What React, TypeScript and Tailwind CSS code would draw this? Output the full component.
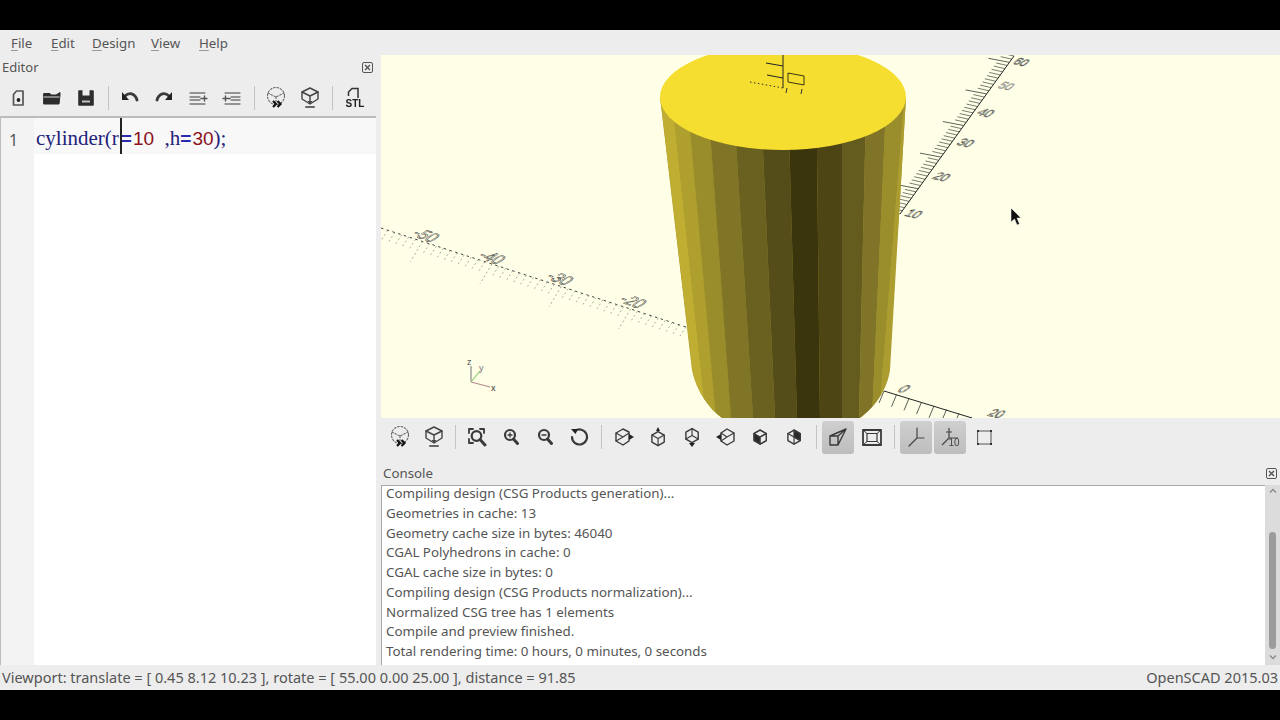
import React from "react";

const B: [number, number][] = [[677,698],[687,706],[700,716],[718,731],[742,753],[767,775],[792,797],[818,820],[842,842],[863,859],[880,872],[893,879],[897,880]];
const C = ["#bfae31","#ae9f2e","#998c2a","#807527","#6a6121","#554d19","#3b350d","#4d4614","#645b1f","#7f7428","#9a8d2c","#ac9d30"];
const xAt = (b: [number, number], y: number) => b[0] + ((b[1] - b[0]) * (y - 240)) / 178;

function Viewport() {
  const yTicks: React.ReactNode[] = [];
  for (let i = 0; i <= 50; i++) {
    const t = i / 50;
    const x = 1014 - 114 * t;
    const y = 56 + 158 * t;
    const long = i % 10 === 2;
    yTicks.push(<line key={i} x1={x} y1={y} x2={x - (long ? 21 : 11)} y2={y - (long ? 4 : 2.5)} stroke="#222" strokeWidth="0.8" opacity={long ? 0.9 : 0.75} />);
  }
  const xTicks: React.ReactNode[] = [];
  for (let i = 0; i <= 44; i++) {
    const t = i / 44;
    const x = 381 + 305 * t;
    const y = 228 + 99 * t;
    const long = i % 10 === 6;
    xTicks.push(<line key={i} x1={x} y1={y} x2={x - (long ? 12 : 6)} y2={y + (long ? 20 : 9)} stroke="#888" strokeWidth="1" strokeDasharray="2 2.5" opacity="0.7" />);
  }
  const zTicks: React.ReactNode[] = [];
  for (let i = 0; i <= 7; i++) {
    const x = 884 + 12.5 * i;
    const y = 391 + 3.7 * i;
    zTicks.push(<line key={i} x1={x} y1={y} x2={x - 5} y2={y + 12} stroke="#333" strokeWidth="0.8" />);
  }
  const lbl = (s: string, x: number, y: number, rot: number, size = 12, c = "#333") => (
    <text x={0} y={0} transform={`translate(${x} ${y}) rotate(${rot}) skewX(-35)`} fontFamily="Liberation Sans, sans-serif" fontSize={size} fill="none" stroke={c} strokeWidth="0.5" textAnchor="middle">{s}</text>
  );
  return (
    <svg viewBox="381 55 899 363" width="899" height="363" className="block">
      <rect x="381" y="55" width="899" height="363" fill="#ffffe8" />
      <line x1="381" y1="228" x2="686" y2="327" stroke="#444" strokeWidth="1" strokeDasharray="2.5 3.5" />
      {xTicks}
      {lbl("-50", 421, 239, 20, 15)}
      {lbl("-40", 487, 261, 20, 15)}
      {lbl("-30", 555, 282, 20, 15)}
      {lbl("-20", 628, 305, 20, 15)}
      <line x1="1014" y1="56" x2="900" y2="214" stroke="#222" strokeWidth="1" />
      {yTicks}
      {lbl("60", 1018, 65, 14, 11)}
      {lbl("50", 1003, 89, 14, 11, "#777")}
      {lbl("40", 982, 116, 14, 12)}
      {lbl("30", 962, 146, 14, 12)}
      {lbl("20", 938, 180, 14, 12)}
      {lbl("10", 910, 217, 14, 12)}
      <line x1="884" y1="391" x2="972" y2="418" stroke="#222" strokeWidth="1" />
      {zTicks}
      {lbl("0", 900, 392, 18, 13)}
      {lbl("20", 993, 417, 12, 12)}
      <clipPath id="cyl"><path d="M660 97 L692 370 C697 394 712 412 725 420 L857 420 C872 410 887 392 890 370 L906 97 Z" /></clipPath>
      <g clipPath="url(#cyl)">
        <rect x="650" y="90" width="270" height="335" fill="#ac9d30" />
        {C.map((c, i) => (
          <polygon key={i} fill={c} points={`${xAt(B[i], 97)},97 ${xAt(B[i + 1], 97)},97 ${xAt(B[i + 1], 420)},420 ${xAt(B[i], 420)},420`} />
        ))}
      </g>
      <ellipse cx="783" cy="97" rx="123" ry="53" fill="#f5de2f" />
      <line x1="783" y1="55" x2="783" y2="88" stroke="#222" strokeWidth="1" />
      <line x1="766" y1="63" x2="783" y2="66" stroke="#222" strokeWidth="1" />
      <line x1="767" y1="75" x2="783" y2="78" stroke="#222" strokeWidth="1" />
      <line x1="750" y1="82" x2="783" y2="88" stroke="#333" strokeWidth="1" strokeDasharray="1.5 2.5" />
      <polygon points="788,73 804,76 804,85 788,82" fill="none" stroke="#3a3510" strokeWidth="1" />
      <line x1="787" y1="88" x2="786" y2="93" stroke="#333" strokeWidth="1" />
      <line x1="802" y1="89" x2="801" y2="94" stroke="#333" strokeWidth="1" />
      <line x1="471" y1="382" x2="471" y2="366" stroke="#888" strokeWidth="1.2" />
      <line x1="471" y1="382" x2="480" y2="371" stroke="#a5d58c" strokeWidth="1.2" />
      <line x1="471" y1="382" x2="490" y2="387" stroke="#b58c8c" strokeWidth="1.2" />
      <text x="467" y="365" fontFamily="Liberation Sans, sans-serif" fontSize="9" fill="#555">z</text>
      <text x="479" y="371" fontFamily="Liberation Sans, sans-serif" fontSize="9" fill="#777">y</text>
      <text x="491" y="391" fontFamily="Liberation Sans, sans-serif" fontSize="9" fill="#333">x</text>
      <path d="M1011 208 L1011 222 L1014.5 219 L1017 225 L1019.5 224 L1017 218 L1021 218 Z" fill="#111" stroke="#fff" strokeWidth="0.5" />
    </svg>
  );
}

const S = ({ children }: { children: React.ReactNode }) => (
  <svg viewBox="0 0 24 24" width="24" height="24" fill="none" stroke="#3a3a3a" strokeWidth="1.6" strokeLinejoin="round" strokeLinecap="round" className="blur-[0.4px]">{children}</svg>
);

const hex = "M12 4 L19 8 L19 16 L12 20 L5 16 L5 8 Z";
const cubeUp = <><path d={hex} /><path d="M5 8 L12 12 L19 8 M12 12 L12 20" strokeWidth="1.3" /></>;
const cubeDown = <><path d={hex} /><path d="M5 16 L12 12 L19 16 M12 12 L12 4" strokeWidth="1.3" /></>;

const I: Record<string, React.ReactNode> = {
  new: <S><path d="M10.5 5 H17 V19 H7.5 V8.5 Z" strokeWidth="1.7" stroke="#555" /><circle cx="12.5" cy="14" r="1.9" fill="#222" stroke="none" /></S>,
  open: <S><path d="M4 7.5 H10 L11 9 H16 L20 6.5 V9 H20 L19 18 H4 Z" fill="#2c2c2c" stroke="#2c2c2c" strokeWidth="1" /><path d="M4 11 H19" stroke="#ddd" strokeWidth="1" /></S>,
  save: <S><path d="M5 5 H19 V19 H5 Z" fill="#2e2e2e" stroke="#2e2e2e" /><rect x="8.5" y="4" width="7" height="5.5" fill="#ededed" stroke="none" /><rect x="8" y="14.5" width="8" height="2" fill="#c4c4c4" stroke="none" /></S>,
  undo: <S><path d="M7 10 C11 6 17 7 19 14" strokeWidth="2.8" /><path d="M4 6 V14 H11 Z" fill="#222" stroke="none" /></S>,
  redo: <S><path d="M17 10 C13 6 7 7 5 14" strokeWidth="2.8" /><path d="M20 6 V14 H13 Z" fill="#222" stroke="none" /></S>,
  indent: <S><path d="M4 7 H19 M4 11 H14 M4 14 H14 M4 18 H19" stroke="#777" strokeWidth="1.3" /><path d="M15 12.5 H21 M18.5 10 V15" stroke="#555" strokeWidth="1.4" /></S>,
  unindent: <S><path d="M5 7 H20 M11 11 H20 M11 14 H20 M5 18 H20" stroke="#777" strokeWidth="1.3" /><path d="M3 12.5 H10 M5.5 10 V15" stroke="#555" strokeWidth="1.4" /></S>,
  preview: <S><g stroke="#666" strokeWidth="1.1"><circle cx="12" cy="10" r="8.5" strokeDasharray="1.6 1.8" /><path d="M4 7 L12 11 L20 7 M12 11 V17" strokeDasharray="1.5 1.8" /></g><path d="M9 15 L12 18 L9 21 M13.5 15 L16.5 18 L13.5 21" stroke="#111" strokeWidth="2.2" strokeLinecap="butt" strokeLinejoin="miter" /></S>,
  render: <S><g stroke="#444" strokeWidth="1.4"><path d="M12 2 L20 6 L20 13 L12 18 L4 13 L4 6 Z" /><path d="M4 6 L12 10 L20 6 M12 10 L12 15" /></g><path d="M9.5 15 H14.5 L12 18 Z" fill="#444" stroke="none" /><path d="M8 21 H16" stroke="#666" strokeWidth="2" /></S>,
  stl: <svg viewBox="0 0 24 24" width="24" height="24" className="blur-[0.3px]"><path d="M5.5 10 V6 L9 2.5 H15 V12" fill="none" stroke="#333" strokeWidth="1.5" /><text x="12" y="21" textAnchor="middle" fontFamily="Liberation Sans, sans-serif" fontWeight="700" fontSize="10" fill="#222">STL</text></svg>,
  all: <S><path d="M4 8 V4 H8 M15 4 H19 V8 M4 14 V18 H8" strokeWidth="1.8" /><circle cx="11.5" cy="11" r="4.8" strokeWidth="2.2" /><path d="M15 14.5 L20 20" strokeWidth="3" /></S>,
  zin: <S><circle cx="11" cy="10" r="5" strokeWidth="2.2" /><path d="M14.5 14 L18.5 18.5" strokeWidth="3" /><path d="M9 10 H13 M11 8 V12" strokeWidth="1.3" /></S>,
  zout: <S><circle cx="11" cy="10" r="5" strokeWidth="2.2" /><path d="M14.5 14 L18.5 18.5" strokeWidth="3" /><path d="M9 10 H13" strokeWidth="1.3" /></S>,
  reset: <S><path d="M8 6 A7.5 7.5 0 1 1 5 12" strokeWidth="2.2" /><path d="M4 4 L11 4 L8.5 9 Z" fill="#222" stroke="none" /></S>,
  right: <S><path d="M11 4 L17 7 L17 16 L11 20 L4 16 L4 8 Z" strokeWidth="1.4" /><path d="M4 8 L11 12 L17 8 M4 16 L11 12" strokeWidth="1.1" /><path d="M22 12 L17 9 V15 Z" fill="#222" stroke="none" /></S>,
  top: <S><g transform="translate(1.5 3) scale(.88)">{cubeUp}</g><path d="M12 2 L10 6 H14 Z" fill="#222" stroke="none" /></S>,
  bottom: <S><g transform="translate(1.5 0) scale(.88)">{cubeDown}</g><path d="M9 18 L12 22 L15 18 Z" fill="#222" stroke="none" /></S>,
  left: <S><path d="M13 4 L20 8 L20 16 L13 20 L7 16 L7 8 Z" strokeWidth="1.4" /><path d="M7 8 L13 12 L20 8 M7 16 L13 12" strokeWidth="1.1" /><path d="M2 12 L7 9 V15 Z" fill="#222" stroke="none" /></S>,
  front: <S><g transform="translate(1.5 1.5) scale(.88)"><path d={hex} fill="#2a2a2a" /><path d="M5 8 L12 4 L19 8 L12 12 Z" fill="#ededed" /><path d="M12 12 L19 8 L19 16 L12 20 Z" fill="#ededed" /></g></S>,
  back: <S><g transform="translate(1.5 1.5) scale(.88)">{cubeUp}<path d="M12 4 L19 8 L19 16 L12 12 Z" fill="#2a2a2a" /></g></S>,
  persp: <S><path d="M4 11 L4 20 L12 20 L12 11 Z M4 11 L20 4 L12 20 M12 11 L20 4" strokeWidth="1.4" /></S>,
  ortho: <S><rect x="3" y="5" width="18" height="15" strokeWidth="1.8" /><rect x="7" y="8.5" width="10" height="8" strokeWidth="1.2" /><path d="M3 5 L7 8.5 M21 5 L17 8.5 M3 20 L7 16.5 M21 20 L17 16.5" strokeWidth="1" /></S>,
  axes: <S><path d="M13 3 V13 L20 13 M13 13 L5 21" stroke="#444" strokeWidth="1.2" /></S>,
  scale: <svg viewBox="0 0 24 24" width="24" height="24" className="blur-[0.3px]"><path d="M11 3 V13 L20 13 M11 13 L4 20 M8 7 H14" stroke="#444" strokeWidth="1.2" fill="none" /><text x="16" y="21" textAnchor="middle" fontFamily="Liberation Sans, sans-serif" fontSize="10" fill="#444">10</text></svg>,
  edges: <S><rect x="6" y="6" width="13" height="13" strokeWidth="0.9" stroke="#444" /><g fill="#333" stroke="none"><rect x="5" y="5" width="2" height="2" /><rect x="18" y="5" width="2" height="2" /><rect x="5" y="18" width="2" height="2" /><rect x="18" y="18" width="2" height="2" /></g></S>,
};

const Btn = ({ i, active }: { i: string; active?: boolean }) => (
  <div className="w-[34px] h-[34px] flex items-center justify-center shrink-0">
    <div className={`w-[32px] h-[33px] flex items-center justify-center rounded-[3px] ${active ? "bg-gradient-to-b from-[#cfcfcf] to-[#bdbdbd]" : ""}`}>{I[i]}</div>
  </div>
);

const Sep = ({ w }: { w: string }) => (
  <div className={`${w} h-[24px] flex justify-center shrink-0`}><div className="w-px h-full bg-[#c4c4c4]" /></div>
);

const CloseX = () => (
  <svg width="11" height="11" viewBox="0 0 11 11" fill="none" stroke="#555" strokeWidth="1"><rect x="0.5" y="0.5" width="10" height="10" rx="1.5" /><path d="M3 3 L8 8 M8 3 L3 8" strokeWidth="1.4" /></svg>
);

const lines = [
  "Compiling design (CSG Products generation)...",
  "Geometries in cache: 13",
  "Geometry cache size in bytes: 46040",
  "CGAL Polyhedrons in cache: 0",
  "CGAL cache size in bytes: 0",
  "Compiling design (CSG Products normalization)...",
  "Normalized CSG tree has 1 elements",
  "Compile and preview finished.",
  "Total rendering time: 0 hours, 0 minutes, 0 seconds",
];

const Mn = ({ a, b, w }: { a: string; b: string; w: string }) => (
  <span className={`${w} shrink-0`}><span className="underline underline-offset-2 decoration-[#999]">{a}</span>{b}</span>
);

export default function App() {
  return (
    <div className="w-[1280px] h-[720px] bg-black flex flex-col overflow-hidden font-['Noto_Sans','Open_Sans',sans-serif] text-[#555] text-[13px]">
      <div className="h-[30px] shrink-0" />
      <div className="h-[660px] bg-[#ededed] flex flex-col">
        <div className="h-[25px] shrink-0 flex items-center pl-[11px] pt-[2px] text-[13.3px]">
          <Mn a="F" b="ile" w="w-[40px]" />
          <Mn a="E" b="dit" w="w-[41px]" />
          <Mn a="D" b="esign" w="w-[59px]" />
          <Mn a="V" b="iew" w="w-[48px]" />
          <Mn a="H" b="elp" w="w-[40px]" />
        </div>
        <div className="flex h-[610px] shrink-0">
          <div className="w-[381px] shrink-0 flex flex-col">
            <div className="h-[25px] shrink-0 flex items-center justify-between pl-[2px] pr-[8px]">
              <span>Editor</span>
              <CloseX />
            </div>
            <div className="h-[36px] shrink-0 flex items-center pl-px">
              <Btn i="new" /><Btn i="open" /><Btn i="save" />
              <Sep w="w-[10px]" />
              <Btn i="undo" /><Btn i="redo" /><Btn i="indent" /><Btn i="unindent" />
              <Sep w="w-[10px]" />
              <Btn i="preview" /><Btn i="render" />
              <Sep w="w-[11px]" />
              <Btn i="stl" />
            </div>
            <div className="flex-1 mr-[5px] flex border-t-2 border-l border-[#bcbcbc] bg-white">
              <div className="w-[33px] shrink-0 bg-[#f3f3f3] pt-[10px] pl-[8px] text-[16px] leading-[24px] text-[#555]">1</div>
              <div className="flex-1 min-w-0">
                <div className="relative h-[36px] bg-[#f8f8f8] pl-[2px] pt-[8px] whitespace-pre font-['Liberation_Serif',serif] text-[21px] leading-[24px] text-[#22227a]">
                  cylinder(r<span className="ml-[2px] mr-[1px] text-[#2a2ab0] font-bold font-['Liberation_Sans',sans-serif] text-[19px]">=</span><span className="text-[#8a1020] font-['Liberation_Sans',sans-serif] text-[19px]">10</span>  ,h<span className="mr-[1px] text-[#2a2ab0] font-bold font-['Liberation_Sans',sans-serif] text-[19px]">=</span><span className="text-[#8a1020] font-['Liberation_Sans',sans-serif] text-[19px]">30</span>);
                  <div className="absolute left-[86px] top-0 w-[2px] h-[36px] bg-[#222]" />
                </div>
              </div>
            </div>
          </div>
          <div className="flex-1 min-w-0 flex flex-col">
            <div className="h-[363px] shrink-0"><Viewport /></div>
            <div className="h-[44px] shrink-0 flex items-start pt-[2px] pl-[2px]">
              <Btn i="preview" /><Btn i="render" />
              <Sep w="w-[9px] mt-[5px]" />
              <Btn i="all" /><Btn i="zin" /><Btn i="zout" /><Btn i="reset" />
              <Sep w="w-[11px] mt-[5px]" />
              <Btn i="right" /><Btn i="top" /><Btn i="bottom" /><Btn i="left" /><Btn i="front" /><Btn i="back" />
              <Sep w="w-[10px] mt-[5px]" />
              <Btn i="persp" active /><Btn i="ortho" />
              <Sep w="w-[10px] mt-[5px]" />
              <Btn i="axes" active /><Btn i="scale" active /><Btn i="edges" />
            </div>
            <div className="h-[23px] shrink-0 flex items-center justify-between pl-[2px] pr-[3px] text-[13.3px]">
              <span>Console</span>
              <CloseX />
            </div>
            <div className="flex-1 min-h-0 flex">
              <div className="flex-1 min-w-0 bg-white border-t border-l border-[#a8a8a8] pl-[4px] overflow-hidden text-[13.35px] leading-[19.75px] text-[#555]">
                <div className="-mt-[2px]">
                  {lines.map((l) => <div key={l} className="whitespace-pre">{l}</div>)}
                </div>
              </div>
              <div className="w-[15px] shrink-0 bg-[#dcdcdc] flex flex-col items-center">
                <svg width="8" height="6" viewBox="0 0 8 6" className="mt-[3px]"><path d="M1 4.5 L4 1.5 L7 4.5" fill="none" stroke="#888" strokeWidth="1.3" /></svg>
                <div className="w-[7px] h-[117px] mt-[38px] rounded bg-[#9c9c9c]" />
                <svg width="8" height="6" viewBox="0 0 8 6" className="mt-[5px]"><path d="M1 1.5 L4 4.5 L7 1.5" fill="none" stroke="#888" strokeWidth="1.3" /></svg>
              </div>
            </div>
          </div>
        </div>
        <div className="h-[25px] shrink-0 flex items-center justify-between pl-[2px] pr-[2px] pt-[1px] text-[14.5px]">
          <span className="whitespace-pre">Viewport: translate = [ 0.45 8.12 10.23 ], rotate = [ 55.00 0.00 25.00 ], distance = 91.85</span>
          <span>OpenSCAD 2015.03</span>
        </div>
      </div>
      <div className="h-[30px] shrink-0" />
    </div>
  );
}
